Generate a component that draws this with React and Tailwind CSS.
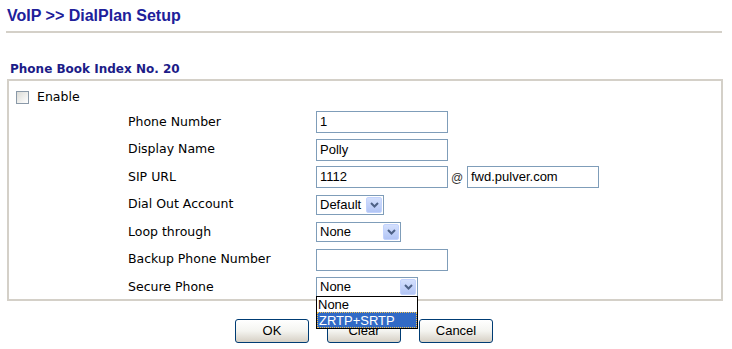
import React from 'react';

const labelFont = { fontFamily: '"DejaVu Sans", Verdana, sans-serif' };

const TextBox = ({ value, w = 'w-[132px]' }) => (
  <div className={`${w} h-[22px] border border-[#7f9db9] bg-white flex items-center px-[3px] text-[13px] text-black font-['Liberation_Sans',Arial,sans-serif]`}>
    {value}
  </div>
);

const Arrow = () => (
  <span className="w-[16px] h-[16px] rounded-[2px] bg-gradient-to-b from-[#d4e0fd] to-[#b2c5f5] border border-[#c3d3fd] flex items-center justify-center">
    <svg width="9" height="6" viewBox="0 0 9 6">
      <path d="M1 1 L4.5 4.5 L8 1" fill="none" stroke="#4d6185" strokeWidth="2" />
    </svg>
  </span>
);

const Select = ({ value, w, h = 'h-[20px]' }) => (
  <div className={`${w} ${h} border border-[#7f9db9] bg-white flex items-center justify-between pl-[3px] pr-[1px] text-[13px] text-black font-['Liberation_Sans',Arial,sans-serif]`}>
    <span>{value}</span>
    <Arrow />
  </div>
);

const Row = ({ label, children }) => (
  <div className="h-[27.5px] flex items-center">
    <div className="w-[188px] text-[12.5px] text-black" style={labelFont}>{label}</div>
    {children}
  </div>
);

const Button = ({ children }) => (
  <div className="w-[74px] h-[24px] rounded-[3px] border border-[#003c74] bg-gradient-to-b from-white via-[#f4f4f0] to-[#d6d0c5] flex items-center justify-center text-[13px] text-black font-['Liberation_Sans',Arial,sans-serif]">
    {children}
  </div>
);

export default function App() {
  return (
    <div className="w-[732px] h-[349px] bg-white relative overflow-hidden">
      <div className="pl-[7px] pt-[6px] text-[16px] font-bold text-[#20209a] leading-[20px] font-['Liberation_Sans',Arial,sans-serif]">
        VoIP &gt;&gt; DialPlan Setup
      </div>
      <div className="ml-[6px] mr-[10px] mt-[5px] h-[2px] bg-[#d4d0c8]" />

      <div className="pl-[10px] mt-[28px] text-[12px] font-bold text-[#1c1c88] leading-[16px]" style={labelFont}>
        Phone Book Index No. 20
      </div>

      <div className="relative ml-[7px] mr-[9px] mt-[2px] h-[222px] border-2 border-[#d4d0c8]">
        <div className="flex items-center pl-[7px] pt-[7px] gap-[8px]">
          <span className="w-[13px] h-[13px] border border-[#8a99a8] bg-gradient-to-br from-[#dcdcd7] to-white" />
          <span className="text-[12.5px] text-black" style={labelFont}>Enable</span>
        </div>

        <div className="pl-[119px] mt-[1.5px]">
          <Row label="Phone Number"><TextBox value="1" /></Row>
          <Row label="Display Name"><TextBox value="Polly" /></Row>
          <Row label="SIP URL">
            <TextBox value="1112" />
            <span className="w-[19px] self-end mb-[4px] pl-[3px] text-[12px] text-[#333] font-['Liberation_Sans',Arial,sans-serif]">@</span>
            <TextBox value="fwd.pulver.com" />
          </Row>
          <Row label="Dial Out Account"><Select value="Default" w="w-[68px]" /></Row>
          <Row label="Loop through"><Select value="None" w="w-[85px]" /></Row>
          <Row label="Backup Phone Number"><TextBox value="" /></Row>
          <Row label="Secure Phone"><Select value="None" w="w-[102px]" h="h-[21px]" /></Row>
        </div>
      </div>

      <div className="flex justify-center gap-[18px] mt-[18px] -translate-x-[2px]">
        <Button>OK</Button>
        <Button>Clear</Button>
        <Button>Cancel</Button>
      </div>

      <div className="absolute left-[316px] top-[296px] w-[102px] border border-black bg-white text-[13px] leading-[15px] font-['Liberation_Sans',Arial,sans-serif]">
        <div className="pl-[1px] text-black h-[15px]">None</div>
        <div className="pl-[1px] h-[16px] bg-[#316ac5] text-white border border-dotted border-[#f2c14e]">ZRTP+SRTP</div>
      </div>
    </div>
  );
}
